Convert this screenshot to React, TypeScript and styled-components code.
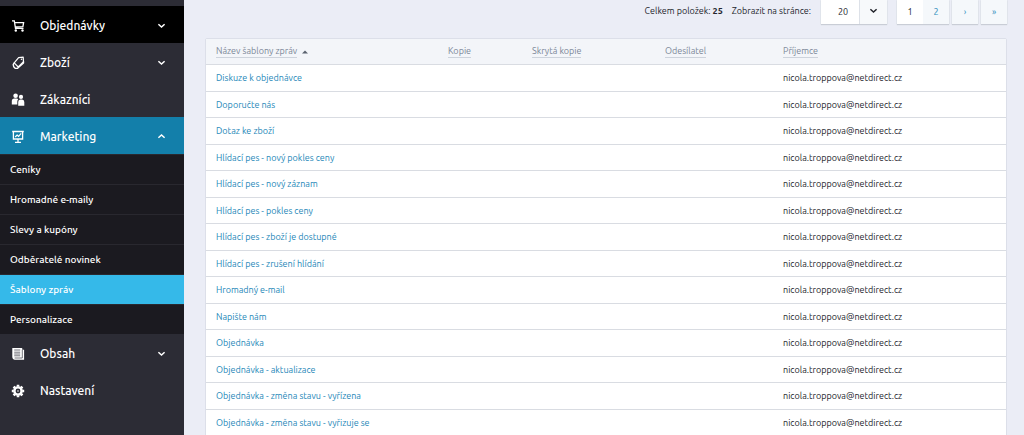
import React from "react";
import styled, { createGlobalStyle, css } from "styled-components";

const GlobalStyle = createGlobalStyle`
  *, *::before, *::after { box-sizing: border-box; }
  body {
    margin: 0;
    background: #ebedf6;
    color: #23252c;
    font-family: Ubuntu, "Noto Sans", sans-serif;
    font-size: 9px;
    line-height: 14px;
  }
  a { text-decoration: none; }
  button, select { font: inherit; color: inherit; }
`;

const Shell = styled.div`
  display: flex;
  height: 100vh;
  overflow: hidden;
`;

const Sidebar = styled.nav`
  flex: 0 0 184px;
  padding-top: 6px;
  background: #2c2c35;
  color: #fff;
`;

const List = styled.ul`
  list-style: none;
  margin: 0;
  padding: 0;
`;

const MainLink = styled.a<{ $tone?: "black" | "blue" }>`
  display: flex;
  align-items: center;
  height: 37px;
  padding: 2px 18px 0 11px;
  font-size: 12px;
  font-weight: 500;
  color: #fff;
  background: ${(p) => (p.$tone === "black" ? "#000" : p.$tone === "blue" ? "#137faa" : "transparent")};

  svg:first-child { margin-right: 15px; }
`;

const MainLabel = styled.span`
  flex: 1;
`;

const SubList = styled(List)`
  background: #1b1a20;
`;

const SubLink = styled.a<{ $active?: boolean }>`
  display: flex;
  align-items: center;
  height: 30px;
  padding: 0 10px;
  border-top: 1px solid #29282f;
  font-size: 10px;
  font-weight: 500;
  color: #fff;
  ${(p) => p.$active && css`background: #35b9e9;`}
`;

const Content = styled.main`
  flex: 1;
  min-width: 0;
  padding: 0 17px 0 21px;
`;

const Toolbar = styled.div`
  display: flex;
  justify-content: flex-end;
  height: 38px;
`;

const Total = styled.span`
  margin-right: 9px;
  line-height: 22px;
`;

const PageSizeLabel = styled.label`
  margin-right: 10px;
  line-height: 22px;
`;

const raised = css`
  height: 24px;
  background: #fff;
  box-shadow: 0 1px 1px #c9cdd6, 0 0 1px #c9cdd6;
`;

const SelectBox = styled.div`
  ${raised}
  position: relative;
  width: 66px;
  margin-right: 10px;
`;

const Select = styled.select`
  appearance: none;
  width: 100%;
  height: 24px;
  padding: 0 28px 0 17px;
  border: 0;
  background: transparent;
`;

const SelectArrow = styled.span`
  position: absolute;
  top: 0;
  right: 0;
  display: flex;
  justify-content: center;
  width: 28px;
  height: 24px;
  padding-top: 6px;
  border-left: 1px solid #dde1e8;
  background: #f7f9fb;
  pointer-events: none;
`;

const Pages = styled.div`
  display: flex;
  gap: 3px;
`;

const PageGroup = styled.div`
  ${raised}
  display: flex;
`;

const PageButton = styled.button<{ $current?: boolean }>`
  display: flex;
  justify-content: center;
  align-items: center;
  width: 26px;
  height: 24px;
  padding: 0;
  border: 0;
  background: ${(p) => (p.$current ? "#fff" : "#f5f8fb")};
  color: ${(p) => (p.$current ? "#23252c" : "#2e8ebb")};
`;

const Table = styled.table`
  width: 100%;
  table-layout: fixed;
  border-collapse: separate;
  border-spacing: 0;
  border: 1px solid #dcdfe9;
  border-radius: 2px;
  background: #fff;
`;

const Column = styled.col<{ $width?: number }>`
  width: ${(p) => (p.$width ? `${p.$width}px` : "auto")};
`;

const HeaderCell = styled.th`
  height: 26px;
  padding: 0 10px;
  border-bottom: 1px solid #d9dce2;
  background: #f3f5f9;
  text-align: left;
  font-weight: 400;
  color: #7b8798;
`;

const SortButton = styled.button`
  display: flex;
  align-items: center;
  gap: 5px;
  height: 12px;
  padding: 0;
  border: 0;
  background: none;
`;

const SortLabel = styled.span`
  line-height: 11px;
  border-bottom: 1px solid #cdd3dc;
`;

const Row = styled.tr`
  height: 27px;
  &:nth-child(even) { height: 26px; }
`;

const Cell = styled.td`
  padding: 0 10px;
  border-bottom: 1px solid #d9dce2;
  white-space: nowrap;
`;

const TemplateLink = styled.a`
  color: #2587b8;
`;

const Chevron = ({ up = false }: { up?: boolean }) => (
  <svg width="9" height="9" viewBox="0 0 9 9" fill="none" stroke="currentColor" strokeWidth="1.500" aria-hidden="true">
    <path d={up ? "M1.400 5.800 4.500 3l3.100 2.800" : "M1.400 3.200 4.500 6l3.100-2.800"} />
  </svg>
);

const Icon = ({ children }: { children: React.ReactNode }) => (
  <svg width="14" height="14" viewBox="0 0 14 14" fill="none" stroke="currentColor" strokeWidth="1.2" aria-hidden="true">
    {children}
  </svg>
);

const CartIcon = () => (
  <Icon>
    <path d="M1 1.800h2.300l1.200 7.600h8M3.600 3.600h9l-.7 4-7.600.4" strokeWidth="1.300" />
    <circle cx="4.800" cy="11.500" r="1.2" fill="currentColor" stroke="none" />
    <circle cx="11.500" cy="11.500" r="1.2" fill="currentColor" stroke="none" />
  </Icon>
);

const TagIcon = () => (
  <Icon>
    <path d="M7.600 1.600 12.200 1.200l.3 4.600-5.300 5.200-4-4.200z" strokeLinejoin="round" />
    <path d="M3.200 6.800 2.200 8.700l.5 2 1.700 1.700 2.200-.1 5.900-5.300V5.600" strokeLinejoin="round" strokeWidth="1.400" />
    <circle cx="10.500" cy="3.300" r=".8" fill="currentColor" stroke="none" />
  </Icon>
);

const PeopleIcon = () => (
  <Icon>
    <g fill="currentColor" stroke="none">
      <circle cx="4.600" cy="2.800" r="2.300" />
      <circle cx="10" cy="3.900" r="2.100" />
      <path d="M.8 11.500V8.200Q.8 5.500 3.400 5.400h2.300q1.100.1 1.500.9-.9.800-.9 2.300v2.900zM7.200 12.800V8.900Q7.200 6.600 9.200 6.400h1.900q2.200.2 2.200 2.500v3.900z" />
    </g>
  </Icon>
);

const BoardIcon = () => (
  <Icon>
    <path d="M1.200 1.500h11.600M2.400 1.500v7.500h9.200V1.500M7 9v3M4 12.400h6" strokeWidth="1.300" />
    <path d="m4.200 7 1.900-2 1.500 1.300 2.600-3" />
  </Icon>
);

const NewsIcon = () => (
  <Icon>
    <path d="M3.600 12.700Q1.500 12.400 1.300 10.200V1h9.900v1.800h1.900v9.900z" fill="currentColor" stroke="none" />
    <path d="M3.200 3h6M3.200 5.200h6M3.200 7h6M3.200 8.800h6M3.600 11h7.700V3" stroke="#63636b" strokeWidth=".9" />
  </Icon>
);

const GearIcon = () => (
  <Icon>
    <circle cx="7" cy="7" r="3.600" strokeWidth="2.400" />
    <path d="M7 .8v2M7 11.200v2M.8 7h2M11.200 7h2M2.600 2.600 4 4M10 10l1.400 1.400M11.400 2.600 10 4M4 10l-1.400 1.400" strokeWidth="2.600" />
    <circle cx="7" cy="7" r=".8" fill="currentColor" stroke="none" />
  </Icon>
);

const marketingPages = [
  "Ceníky",
  "Hromadné e-maily",
  "Slevy a kupóny",
  "Odběratelé novinek",
  "Šablony zpráv",
  "Personalizace",
];

const templates = [
  "Diskuze k objednávce",
  "Doporučte nás",
  "Dotaz ke zboží",
  "Hlídací pes - nový pokles ceny",
  "Hlídací pes - nový záznam",
  "Hlídací pes - pokles ceny",
  "Hlídací pes - zboží je dostupné",
  "Hlídací pes - zrušení hlídání",
  "Hromadný e-mail",
  "Napište nám",
  "Objednávka",
  "Objednávka - aktualizace",
  "Objednávka - změna stavu - vyřízena",
  "Objednávka - změna stavu - vyřizuje se",
];

const columns = [
  { title: "Název šablony zpráv", width: 232, sorted: true },
  { title: "Kopie", width: 84 },
  { title: "Skrytá kopie", width: 133 },
  { title: "Odesílatel", width: 118 },
  { title: "Příjemce" },
];

export default function App() {
  return (
    <>
      <GlobalStyle />
      <Shell>
        <Sidebar>
          <List>
            <li>
              <MainLink href="#objednavky" $tone="black">
                <CartIcon />
                <MainLabel>Objednávky</MainLabel>
                <Chevron />
              </MainLink>
            </li>
            <li>
              <MainLink href="#zbozi">
                <TagIcon />
                <MainLabel>Zboží</MainLabel>
                <Chevron />
              </MainLink>
            </li>
            <li>
              <MainLink href="#zakaznici">
                <PeopleIcon />
                <MainLabel>Zákazníci</MainLabel>
              </MainLink>
            </li>
            <li>
              <MainLink href="#marketing" $tone="blue">
                <BoardIcon />
                <MainLabel>Marketing</MainLabel>
                <Chevron up />
              </MainLink>
              <SubList>
                {marketingPages.map((name) => (
                  <li key={name}>
                    <SubLink href="#marketing" $active={name === "Šablony zpráv"}>
                      {name}
                    </SubLink>
                  </li>
                ))}
              </SubList>
            </li>
            <li>
              <MainLink href="#obsah">
                <NewsIcon />
                <MainLabel>Obsah</MainLabel>
                <Chevron />
              </MainLink>
            </li>
            <li>
              <MainLink href="#nastaveni">
                <GearIcon />
                <MainLabel>Nastavení</MainLabel>
              </MainLink>
            </li>
          </List>
        </Sidebar>
        <Content>
          <Toolbar>
            <Total>
              Celkem položek: <strong>25</strong>
            </Total>
            <PageSizeLabel htmlFor="page-size">Zobrazit na stránce:</PageSizeLabel>
            <SelectBox>
              <Select id="page-size" defaultValue="20">
                <option>20</option>
                <option>50</option>
              </Select>
              <SelectArrow>
                <Chevron />
              </SelectArrow>
            </SelectBox>
            <Pages>
              <PageGroup>
                <PageButton type="button" $current>1</PageButton>
                <PageButton type="button">2</PageButton>
              </PageGroup>
              <PageGroup>
                <PageButton type="button">›</PageButton>
              </PageGroup>
              <PageGroup>
                <PageButton type="button">»</PageButton>
              </PageGroup>
            </Pages>
          </Toolbar>
          <Table>
            <colgroup>
              {columns.map((c) => (
                <Column key={c.title} $width={c.width} />
              ))}
            </colgroup>
            <thead>
              <tr>
                {columns.map((c) => (
                  <HeaderCell key={c.title} scope="col">
                    <SortButton type="button">
                      <SortLabel>{c.title}</SortLabel>
                      {c.sorted && (
                        <svg width="6" height="4" viewBox="0 0 6 4" aria-hidden="true">
                          <path d="M0 3.500 3 .5l3 3z" fill="#59616e" />
                        </svg>
                      )}
                    </SortButton>
                  </HeaderCell>
                ))}
              </tr>
            </thead>
            <tbody>
              {templates.map((name) => (
                <Row key={name}>
                  <Cell>
                    <TemplateLink href="#sablona">{name}</TemplateLink>
                  </Cell>
                  <Cell />
                  <Cell />
                  <Cell />
                  <Cell>nicola.troppova@netdirect.cz</Cell>
                </Row>
              ))}
            </tbody>
          </Table>
        </Content>
      </Shell>
    </>
  );
}
